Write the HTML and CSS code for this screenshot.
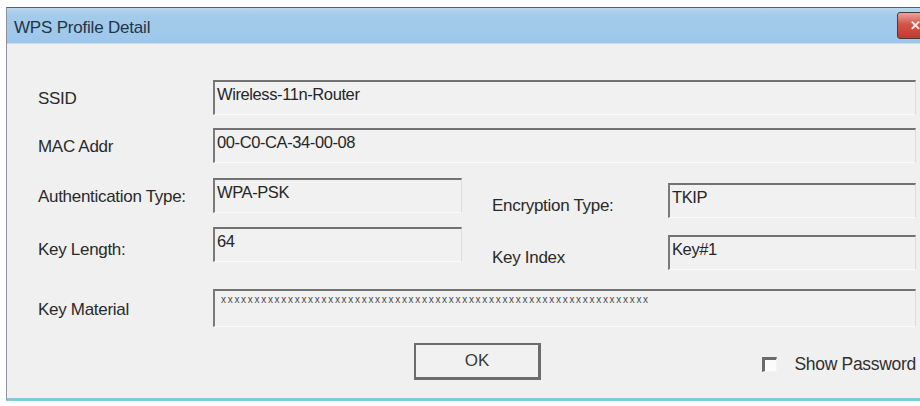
FILE: index.html
```html
<!DOCTYPE html>
<html lang="en">
<head>
    <meta charset="UTF-8">
    <meta name="viewport" content="width=device-width, initial-scale=1.0">
    <title>WPS Profile Detail</title>
    <link rel="stylesheet" href="styles.css">
</head>
<body>
    <div class="window">
        <div class="titlebar">
            <span class="title">WPS Profile Detail</span>
            <span class="close-btn"><span class="close-x">&#x2715;</span></span>
        </div>

        <div class="dialog">
            <div class="row row-ssid">
                <span class="label">SSID</span>
                <div class="field wide">Wireless-11n-Router</div>
            </div>

            <div class="row row-mac">
                <span class="label">MAC Addr</span>
                <div class="field wide">00-C0-CA-34-00-08</div>
            </div>

            <div class="row row-auth">
                <div class="half">
                    <span class="label">Authentication Type:</span>
                    <div class="field short">WPA-PSK</div>
                </div>
                <div class="half right">
                    <span class="label">Encryption Type:</span>
                    <div class="field wide">TKIP</div>
                </div>
            </div>

            <div class="row row-key">
                <div class="half">
                    <span class="label">Key Length:</span>
                    <div class="field short">64</div>
                </div>
                <div class="half right">
                    <span class="label">Key Index</span>
                    <div class="field wide">Key#1</div>
                </div>
            </div>

            <div class="row row-material">
                <span class="label">Key Material</span>
                <div class="field wide material"><span class="mask">xxxxxxxxxxxxxxxxxxxxxxxxxxxxxxxxxxxxxxxxxxxxxxxxxxxxxxxxxxxxxxxx</span></div>
            </div>

            <div class="buttons">
                <button class="ok-btn">OK</button>
                <label class="show-pw">
                    <span class="checkbox"></span>
                    Show Password
                </label>
            </div>
        </div>
    </div>
</body>
</html>
```

FILE: styles.css
```css
body {
    margin: 0;
    background: #ffffff;
    font-family: "Liberation Sans", Arial, sans-serif;
    color: #2a2a2a;
    overflow: hidden;
}
.window {
    width: 930px;
    margin: 7px 0 0 6px;
    border-top: 1px solid #5a5e66;
    border-left: 1px solid #8d9298;
    border-bottom: 3px solid #7fcbdc;
    background: #f0f0f0;
}
.titlebar {
    height: 35px;
    display: flex;
    align-items: center;
    background: linear-gradient(to bottom, #b8d8ee 0%, #a3cbea 20%, #9dc7ea 100%);
    border-bottom: 1px solid #c9dcea;
}
.title {
    padding: 4px 0 0 7px;
    font-size: 17px;
    letter-spacing: -0.2px;
    color: #243448;
}
.close-btn {
    margin-left: auto;
    margin-right: 4px;
    width: 34px;
    height: 25px;
    border: 1px solid #4a3a3a;
    border-radius: 3px;
    background: linear-gradient(to bottom, #e8a49a 0%, #d4544a 45%, #c03a30 100%);
    display: flex;
    align-items: center;
    justify-content: center;
}
.close-x {
    color: #fbe8e4;
    font-size: 13px;
    font-weight: bold;
}
.dialog {
    padding: 36px 21px 18px 31px;
}
.row {
    display: flex;
    align-items: center;
}
.row-mac {
    margin-top: 13px;
}
.row-auth {
    margin-top: 15px;
    align-items: flex-start;
}
.row-key {
    margin-top: 9px;
    align-items: flex-start;
}
.row-material {
    margin-top: 19px;
}
.half {
    display: flex;
    align-items: center;
}
.half.right {
    flex: 1;
    margin-left: 30px;
    padding-top: 5px;
}
.row-key .half.right {
    padding-top: 8px;
}
.row-key .half .label {
    padding-top: 10px;
}
.label {
    width: 175px;
    flex: none;
    font-size: 17px;
    letter-spacing: -0.3px;
    padding-top: 3px;
}
.half.right .label {
    width: 176px;
    padding-top: 10px;
}
.field {
    box-sizing: border-box;
    height: 35px;
    padding: 2px 2px 0 2px;
    border-top: 2px solid #727272;
    border-left: 2px solid #7a7a7a;
    border-right: 1px solid #dcdcdc;
    border-bottom: 1px solid #fbfbfb;
    background: #f1f1f1;
    font-size: 16.5px;
    line-height: 20px;
    letter-spacing: -0.4px;
    color: #262626;
    white-space: nowrap;
}
.field.wide {
    flex: 1;
}
.field.short {
    width: 249px;
}
.field.material {
    height: 38px;
    padding: 4px 0 0 6px;
}
.mask {
    font-size: 10px;
    letter-spacing: 1.7px;
    line-height: 10px;
    color: #4a4a4a;
    display: block;
}
.buttons {
    display: flex;
    align-items: center;
    margin-top: 16px;
}
.ok-btn {
    margin-left: 376px;
    width: 127px;
    height: 37px;
    border: 2px solid #6c6c6c;
    border-right-width: 3px;
    border-bottom-width: 3px;
    background: #f1f1f1;
    font-family: "Liberation Sans", Arial, sans-serif;
    font-size: 17px;
    color: #3a3a3a;
    padding: 0;
}
.show-pw {
    margin-left: auto;
    margin-right: 0;
    display: flex;
    align-items: center;
    font-size: 17.5px;
    letter-spacing: -0.3px;
    color: #303030;
    padding-top: 6px;
}
.checkbox {
    box-sizing: border-box;
    width: 15px;
    height: 15px;
    margin-right: 17px;
    border-top: 3px solid #6a6a6a;
    border-left: 3px solid #6a6a6a;
    border-right: 1px solid #f4f4f4;
    border-bottom: 1px solid #f4f4f4;
    background: #fbfbfb;
}
```
